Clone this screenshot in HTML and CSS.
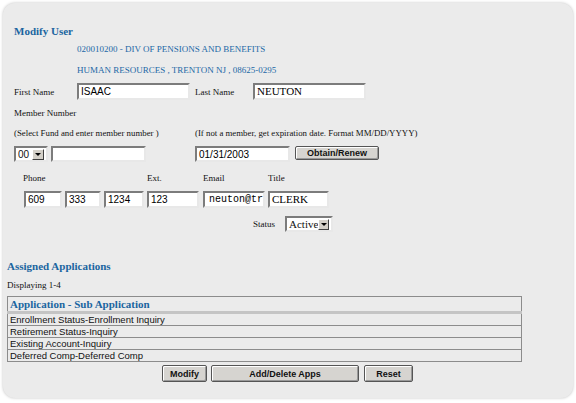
FILE: index.html
```html
<!DOCTYPE html>
<html lang="en">
<head>
    <meta charset="UTF-8">
    <title>Modify User</title>
    <link rel="stylesheet" href="styles.css">
</head>
<body>
    <div class="panel">
        <div class="user-form">
            <h2 class="title">Modify User</h2>
            <div class="org org-first">020010200 - DIV OF PENSIONS AND BENEFITS</div>
            <div class="org org-second">HUMAN RESOURCES , TRENTON NJ , 08625-0295</div>

            <!-- Name -->
            <div class="row name-row">
                <span class="label first-label">First Name</span>
                <span class="field name-field sans">ISAAC</span>
                <span class="label last-label">Last Name</span>
                <span class="field name-field">NEUTON</span>
            </div>

            <div class="plain member-label">Member Number</div>
            <div class="row hint-row">
                <span class="hint-left">(Select Fund and enter member number )</span>
                <span>(If not a member, get expiration date. Format MM/DD/YYYY)</span>
            </div>

            <div class="row member-row">
                <span class="dropdown fund">
                    <span class="dropdown-text">00</span>
                    <span class="dropdown-arrow"></span>
                </span>
                <span class="field member-field"></span>
                <span class="field date-field sans">01/31/2003</span>
                <span class="button obtain">Obtain/Renew</span>
            </div>

            <!-- Contact -->
            <div class="contact">
                <span class="label phone-label">Phone</span>
                <span class="label ext-label">Ext.</span>
                <span class="label">Email</span>
                <span class="label">Title</span>
                <span class="phone-group">
                    <span class="field sans w-area">609</span>
                    <span class="field sans w-prefix">333</span>
                    <span class="field sans w-line">1234</span>
                </span>
                <span class="field sans w-ext">123</span>
                <span class="field mono w-email">neuton@tr</span>
                <span class="field w-title">CLERK</span>
            </div>

            <div class="row status-row">
                <span class="label">Status</span>
                <span class="dropdown status">
                    <span class="dropdown-text serif">Active</span>
                    <span class="dropdown-arrow"></span>
                </span>
            </div>
        </div>

        <!-- Applications -->
        <h3 class="apps-title">Assigned Applications</h3>
        <div class="plain displaying">Displaying 1-4</div>
        <table class="apps">
            <tr><th>Application - Sub Application</th></tr>
            <tr><td>Enrollment Status-Enrollment Inquiry</td></tr>
            <tr><td>Retirement Status-Inquiry</td></tr>
            <tr><td>Existing Account-Inquiry</td></tr>
            <tr><td>Deferred Comp-Deferred Comp</td></tr>
        </table>

        <div class="actions">
            <span class="button action modify">Modify</span>
            <span class="button action add-delete">Add/Delete Apps</span>
            <span class="button action reset">Reset</span>
        </div>
    </div>
</body>
</html>
```

FILE: styles.css
```css
body {
    margin: 0;
    background-color: #ffffff;
    font-family: "Liberation Serif", "Times New Roman", serif;
    font-size: 9px;
    color: #111;
}
.panel {
    margin: 3px;
    width: 570px;
    height: 395px;
    box-sizing: border-box;
    padding: 21px 0 0 4px;
    background-color: #ebebeb;
    border-radius: 12px;
    box-shadow: 0 0 3px rgba(0, 0, 0, 0.25);
}
.user-form {
    padding-left: 7px;
}
.title {
    margin: 0;
    height: 14px;
    line-height: 14px;
    font-size: 11px;
    font-weight: bold;
    color: #1a65a0;
}
.org {
    height: 12px;
    line-height: 12px;
    padding-left: 63px;
    color: #1c68a6;
}
.org-first {
    margin-top: 5px;
}
.org-second {
    margin-top: 9px;
}
.row {
    display: flex;
    align-items: center;
}
.label, .plain {
    line-height: 12px;
}
.name-row {
    margin-top: 7px;
    height: 17px;
}
.first-label {
    width: 63px;
}
.last-label {
    width: 58px;
    margin-left: 5px;
}
.field {
    display: inline-block;
    box-sizing: border-box;
    height: 17px;
    line-height: 13px;
    padding: 0 2px;
    background-color: #fff;
    border: 2px solid;
    border-color: #7c7c7c #e8e8e8 #e8e8e8 #7c7c7c;
    font-family: "Liberation Serif", serif;
    font-size: 11px;
    color: #000;
    white-space: nowrap;
    overflow: hidden;
}
.sans {
    font-family: "Liberation Sans", Arial, sans-serif;
    font-size: 10px;
}
.mono {
    font-family: "Liberation Mono", "Courier New", monospace;
    font-size: 10px;
    text-align: right;
    padding-right: 0;
}
.name-field {
    width: 113px;
}
.member-label {
    margin-top: 7px;
}
.hint-row {
    margin-top: 8px;
    height: 12px;
    font-size: 8.8px;
}
.hint-left {
    width: 181px;
}
.member-row {
    margin-top: 7px;
    height: 16px;
}
.member-row .field {
    height: 16px;
}
.dropdown {
    display: inline-flex;
    align-items: center;
    box-sizing: border-box;
    height: 16px;
    padding: 0 2px 0 2px;
    background-color: #fff;
    border: 2px solid;
    border-color: #7c7c7c #e8e8e8 #e8e8e8 #7c7c7c;
    font-family: "Liberation Sans", Arial, sans-serif;
    font-size: 10px;
}
.dropdown-text {
    flex: 1;
}
.dropdown-arrow {
    position: relative;
    width: 12px;
    height: 11px;
    background-color: #d4d0c8;
    border: 1px solid;
    border-color: #fff #404040 #404040 #fff;
    box-sizing: border-box;
}
.dropdown-arrow::after {
    content: "";
    position: absolute;
    left: 2px;
    top: 3px;
    border-left: 3px solid transparent;
    border-right: 3px solid transparent;
    border-top: 3px solid #000;
}
.fund {
    width: 34px;
}
.member-field {
    width: 95px;
    margin-left: 3px;
}
.date-field {
    width: 95px;
    margin-left: 49px;
}
.button {
    display: inline-flex;
    align-items: center;
    justify-content: center;
    box-sizing: border-box;
    background-color: #d6d4d0;
    border: 1px solid #555;
    border-radius: 2px;
    box-shadow: inset 1px 1px 0 #fff, inset -1px -1px 0 #999;
    font-family: "Liberation Sans", Arial, sans-serif;
    font-size: 9px;
    font-weight: bold;
    color: #111;
}
.obtain {
    width: 84px;
    height: 14px;
    margin-left: 5px;
    align-self: flex-start;
}
.contact {
    display: grid;
    grid-template-columns: 124px 56px 65px 62px;
    grid-template-rows: 12px 17px;
    row-gap: 7px;
    margin-top: 10px;
    padding-left: 9px;
}
.phone-group {
    display: flex;
    gap: 3px;
    padding-left: 1px;
}
.w-area { width: 38px; }
.w-prefix { width: 36px; }
.w-line { width: 40px; }
.w-ext { width: 52px; }
.w-email { width: 62px; }
.w-title { width: 61px; }
.status-row {
    margin-top: 8px;
    height: 16px;
    padding-left: 239px;
}
.status-row .label {
    width: 32px;
}
.status {
    width: 48px;
}
.serif {
    font-family: "Liberation Serif", serif;
    font-size: 11px;
}
.apps-title {
    margin: 27px 0 0;
    height: 14px;
    line-height: 14px;
    font-size: 11px;
    font-weight: bold;
    color: #1a65a0;
}
.displaying {
    margin-top: 6px;
}
.apps {
    width: 515px;
    margin-top: 5px;
    border-collapse: collapse;
    border: 1px solid #8c8c8c;
}
.apps th {
    height: 14px;
    padding: 0 2px;
    text-align: left;
    font-size: 11px;
    font-weight: bold;
    color: #1a65a0;
    border-bottom: 3px solid #c4c4c4;
}
.apps td {
    height: 11px;
    padding: 0 2px;
    line-height: 11px;
    font-family: "Liberation Sans", Arial, sans-serif;
    font-size: 9.5px;
    border-top: 1px solid #8c8c8c;
}
.actions {
    display: flex;
    gap: 4px;
    margin-top: 3px;
    padding-left: 155px;
}
.action {
    height: 17px;
}
.modify { width: 45px; }
.add-delete { width: 148px; }
.reset { width: 49px; margin-left: 1px; }
```
